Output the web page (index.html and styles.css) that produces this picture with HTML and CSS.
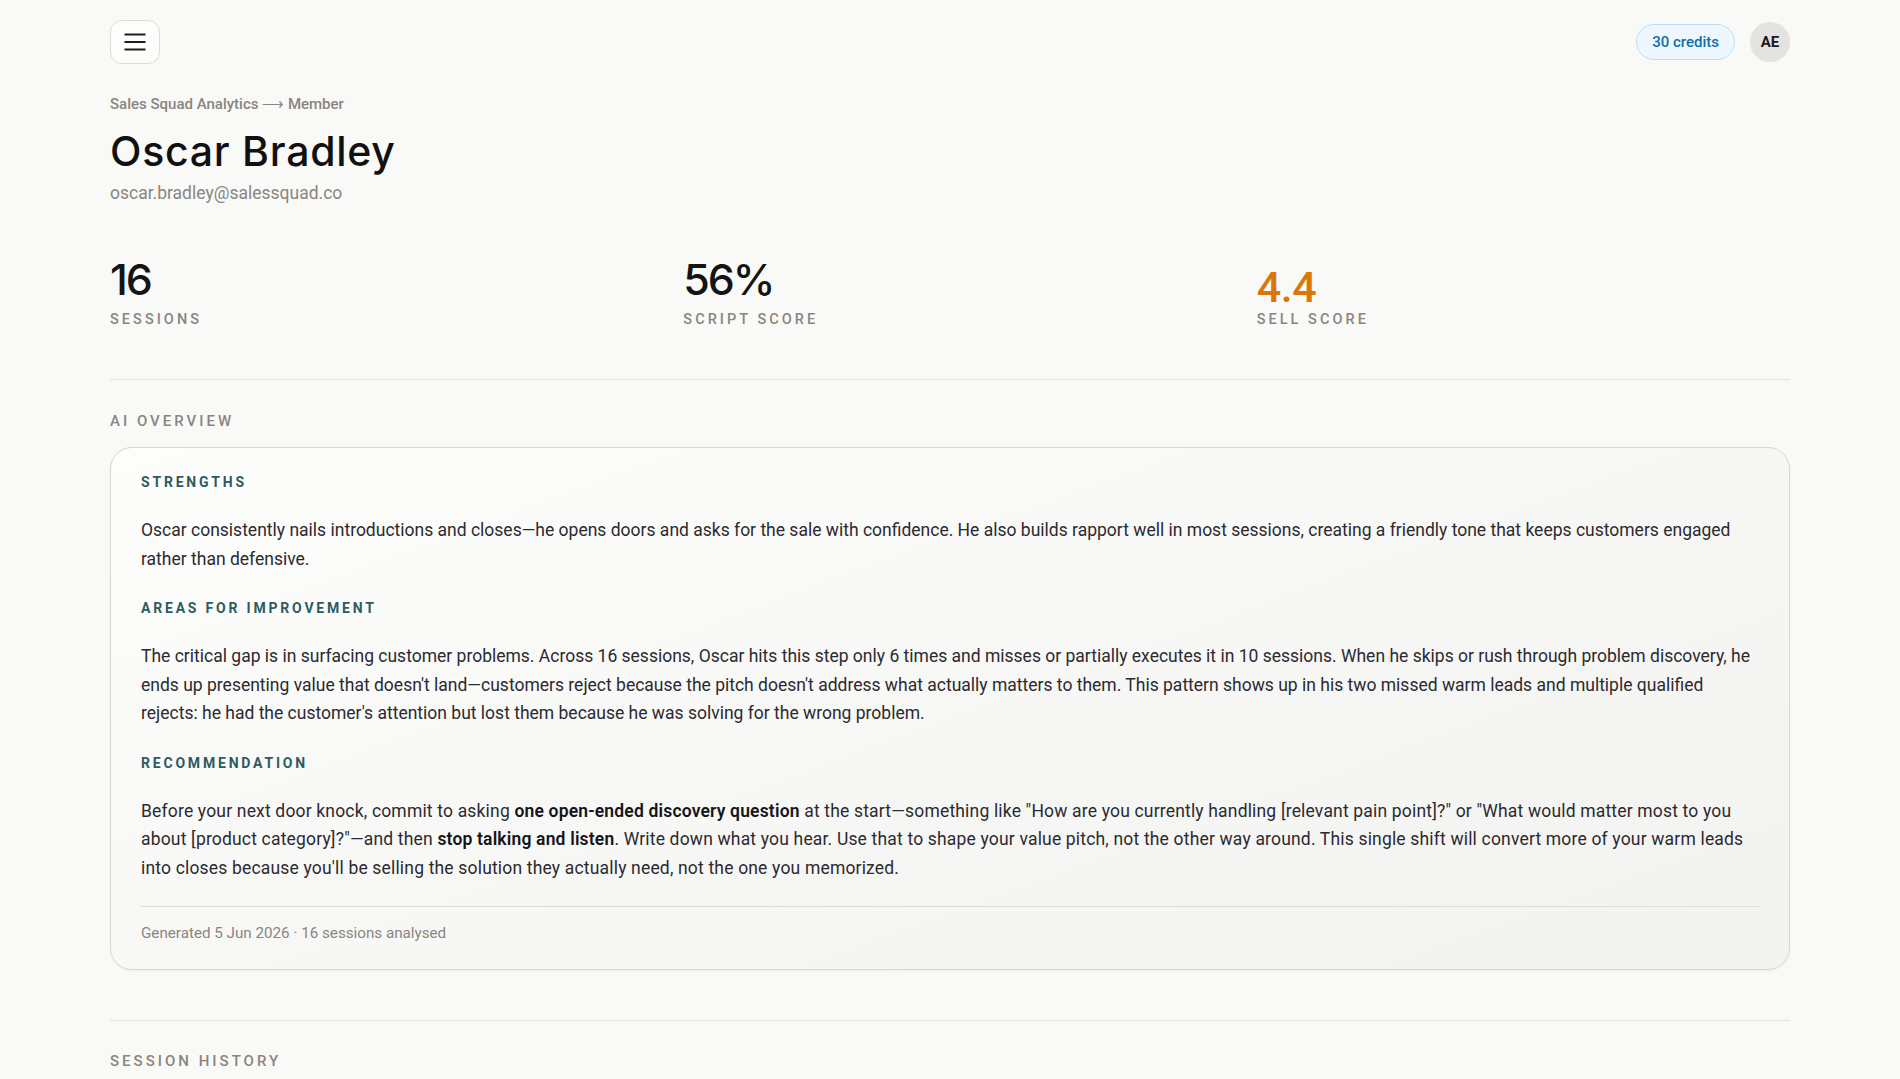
FILE: index.html
```html
<!DOCTYPE html>
<html lang="en">
<head>
<meta charset="utf-8">
<title>Oscar Bradley · Sales Squad Analytics</title>
<link rel="stylesheet" href="styles.css">
</head>
<body>
<div class="page">
  <header class="topbar">
    <button class="menu-btn" aria-label="Open menu">
      <svg width="22" height="18" viewBox="0 0 22 18" fill="none" stroke="#1c1c1c" stroke-width="2" stroke-linecap="butt">
        <line x1="0.5" y1="1.5" x2="21.5" y2="1.5"/>
        <line x1="0.5" y1="9" x2="21.5" y2="9"/>
        <line x1="0.5" y1="16.5" x2="21.5" y2="16.5"/>
      </svg>
    </button>
    <div class="topbar-right">
      <span class="credits">30 credits</span>
      <span class="avatar">AE</span>
    </div>
  </header>

  <section class="profile">
    <div class="crumbs">Sales Squad Analytics <span class="crumb-arrow">⟶</span> Member</div>
    <h1 class="name">Oscar Bradley</h1>
    <div class="email">oscar.bradley@salessquad.co</div>
  </section>

  <section class="stats">
    <div class="stat">
      <div class="stat-value">16</div>
      <div class="stat-label">Sessions</div>
    </div>
    <div class="stat">
      <div class="stat-value">56%</div>
      <div class="stat-label">Script score</div>
    </div>
    <div class="stat">
      <div class="stat-value stat-value--sell">4.4</div>
      <div class="stat-label">Sell score</div>
    </div>
  </section>

  <section class="section">
    <h2 class="section-title">AI Overview</h2>
    <div class="overview-card">
      <h3 class="block-title">Strengths</h3>
      <p class="block-text">Oscar consistently nails introductions and closes—he opens doors and asks for the sale with confidence. He also builds rapport well in most sessions, creating a friendly tone that keeps customers engaged rather than defensive.</p>

      <h3 class="block-title">Areas for improvement</h3>
      <p class="block-text">The critical gap is in surfacing customer problems. Across 16 sessions, Oscar hits this step only 6 times and misses or partially executes it in 10 sessions. When he skips or rush through problem discovery, he ends up presenting value that doesn't land—customers reject because the pitch doesn't address what actually matters to them. This pattern shows up in his two missed warm leads and multiple qualified rejects: he had the customer's attention but lost them because he was solving for the wrong problem.</p>

      <h3 class="block-title">Recommendation</h3>
      <p class="block-text block-text--action">Before your next door knock, commit to asking <strong>one open-ended discovery question</strong> at the start—something like "How are you currently handling [relevant pain point]?" or "What would matter most to you about [product category]?"—and then <strong>stop talking and listen</strong>. Write down what you hear. Use that to shape your value pitch, not the other way around. This single shift will convert more of your warm leads into closes because you'll be selling the solution they actually need, not the one you memorized.</p>

      <div class="card-foot">Generated 5 Jun 2026 · 16 sessions analysed</div>
    </div>
  </section>

  <section class="section section--history">
    <h2 class="section-title">Session History</h2>
  </section>
</div>
</body>
</html>
```

FILE: styles.css
```css
* {
  box-sizing: border-box;
}

html, body {
  margin: 0;
  padding: 0;
}

body {
  background: #f9f9f7;
  color: #2b2a30;
  font-family: Roboto, "Noto Sans", "Liberation Sans", sans-serif;
  -webkit-font-smoothing: antialiased;
}

.page {
  max-width: 1680px;
  margin: 0 auto;
  padding: 20px 0 40px;
}

/* top bar */
.topbar {
  display: flex;
  align-items: center;
  justify-content: space-between;
  height: 44px;
}

.menu-btn {
  width: 50px;
  height: 44px;
  display: flex;
  align-items: center;
  justify-content: center;
  background: #fdfdfc;
  border: 1px solid #dddcd9;
  border-radius: 12px;
  padding: 0;
  cursor: pointer;
}

.topbar-right {
  display: flex;
  align-items: center;
  gap: 15px;
}

.credits {
  display: inline-flex;
  align-items: center;
  height: 36px;
  padding: 0 15px;
  border-radius: 18px;
  background: #eef7fe;
  border: 1px solid #b8dffa;
  color: #0f6fa6;
  font-size: 15px;
  font-weight: 500;
}

.avatar {
  width: 40px;
  height: 40px;
  border-radius: 50%;
  background: #e4e3e1;
  color: #1a1a1a;
  display: flex;
  align-items: center;
  justify-content: center;
  font-size: 15px;
  font-weight: 700;
}

/* profile heading */
.profile {
  padding-top: 30px;
}

.crumbs {
  font-size: 15px;
  line-height: 20px;
  font-weight: 500;
  color: #8a8580;
}

.crumb-arrow {
  font-weight: 400;
}

.name {
  margin: 12px 0 0;
  font-family: Inter, "Noto Sans", sans-serif;
  font-size: 41px;
  line-height: 50px;
  font-weight: 500;
  letter-spacing: 0.018em;
  color: #111111;
}

.email {
  margin-top: 5px;
  font-size: 17.5px;
  line-height: 24px;
  color: #8a8580;
}

/* stats row */
.stats {
  display: grid;
  grid-template-columns: repeat(3, 1fr);
  gap: 40px;
  margin-top: 52px;
  padding-bottom: 50px;
  border-bottom: 1px solid #e3e2df;
}

.stat-value {
  font-family: Inter, "Noto Sans", sans-serif;
  font-size: 43px;
  line-height: 44px;
  font-weight: 500;
  letter-spacing: -0.05em;
  color: #141414;
}

.stat-value--sell {
  font-family: Roboto, "Noto Sans", sans-serif;
  color: #d97708;
  letter-spacing: -0.01em;
  position: relative;
  top: 8px;
}

.stat-label {
  margin-top: 10px;
  font-size: 14.5px;
  line-height: 18px;
  font-weight: 500;
  letter-spacing: 0.21em;
  text-transform: uppercase;
  color: #8a8580;
}

/* sections */
.section {
  padding-top: 31px;
  padding-bottom: 50px;
  border-bottom: 1px solid #e3e2df;
}

.section--history {
  border-bottom: 0;
  padding-top: 30px;
}

.section-title {
  margin: 0;
  font-size: 15px;
  line-height: 20px;
  font-weight: 500;
  letter-spacing: 0.2em;
  text-transform: uppercase;
  color: #8a8580;
}

.overview-card {
  margin-top: 16px;
  padding: 24px 30px 26px;
  border: 1px solid #d9d7d4;
  border-radius: 22px;
  background: linear-gradient(160deg, #fdfdfc 0%, #f6f6f4 60%, #f2f2f0 100%);
  box-shadow: 0 1px 2px rgba(0, 0, 0, 0.05);
}

.block-title {
  margin: 25px 0 24px;
  font-size: 14px;
  line-height: 20px;
  font-weight: 700;
  letter-spacing: 0.2em;
  text-transform: uppercase;
  color: #2f5b60;
}

.block-title:first-child {
  margin-top: 0;
}

.block-text {
  margin: 0;
  font-size: 17.5px;
  line-height: 28.5px;
  color: #2b2a30;
}

.block-text--action {
  letter-spacing: 0.01em;
}

.block-text strong {
  font-weight: 600;
  color: #151418;
}

.card-foot {
  margin-top: 24px;
  padding-top: 16px;
  border-top: 1px solid #dedcd9;
  font-size: 15.2px;
  line-height: 20px;
  color: #8a8580;
}
```
